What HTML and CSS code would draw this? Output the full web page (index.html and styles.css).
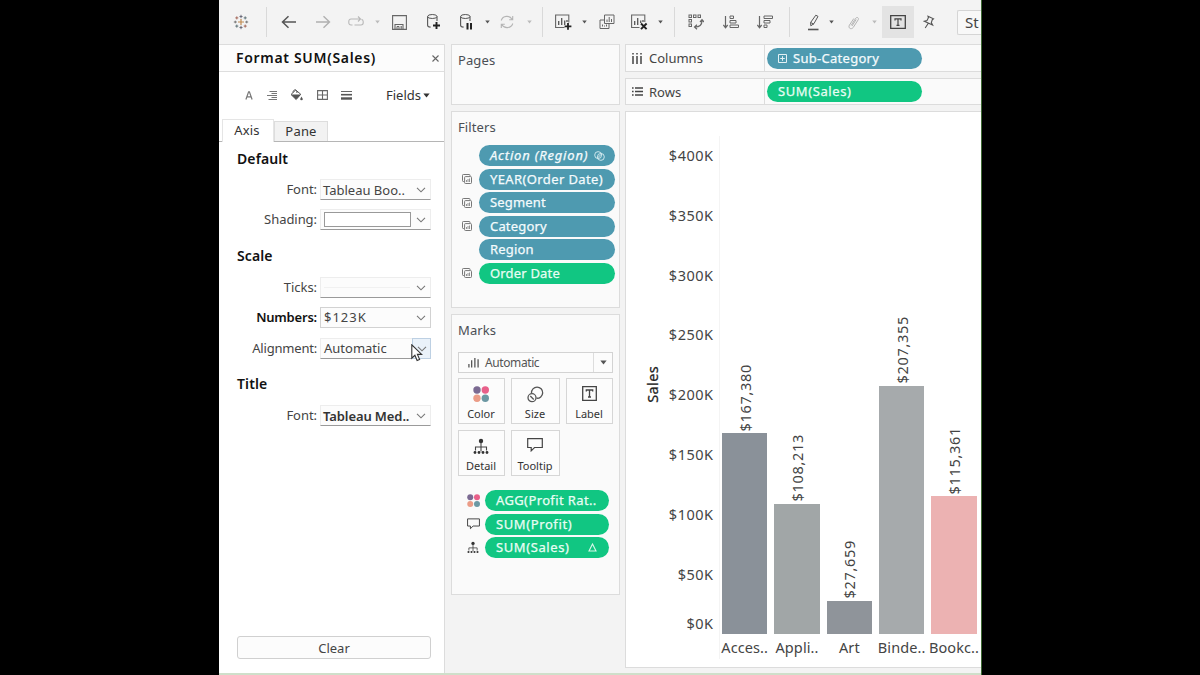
FILE: index.html
```html
<!DOCTYPE html>
<html lang="en">
<head>
<meta charset="utf-8">
<title>Format SUM(Sales)</title>
<link rel="stylesheet" href="styles.css">
</head>
<body>
<svg class="defs" aria-hidden="true">
  <defs>
    <symbol id="chev" viewBox="0 0 10 6"><path d="M1 .8 5 4.8 9 .8" fill="none" stroke="#777" stroke-width="1.1"/></symbol>
    <symbol id="caret" viewBox="0 0 6 4"><path d="M.3.3h5.4L3 3.8z" fill="currentColor"/></symbol>
    <symbol id="sheets" viewBox="0 0 10 10"><path d="M2 7.5H1.3A.8.8 0 0 1 .5 6.700V1.300A.8.8 0 0 1 1.300.5H7.200A.8.8 0 0 1 8 1.300V2" fill="none" stroke="#777"/><rect x="2.600" y="2.600" width="6.900" height="6.900" rx=".8" fill="none" stroke="#777"/><path d="M4.500 8V6M6 8V5M7.500 8V4.500" stroke="#888" stroke-width=".9"/></symbol>
    <symbol id="dots" viewBox="0 0 16 16"><circle cx="4" cy="4" r="3.700" fill="#7b6a92"/><circle cx="12.300" cy="4" r="3.700" fill="#e8608a"/><circle cx="4" cy="12.300" r="3.700" fill="#eb9c87"/><circle cx="12.300" cy="12.300" r="3.700" fill="#6c98a3"/></symbol>
    <symbol id="tree" viewBox="0 0 16 16"><g fill="#333"><circle cx="8" cy="2.500" r="2.200"/><circle cx="2" cy="14" r="1.400"/><circle cx="6" cy="14" r="1.400"/><circle cx="10" cy="14" r="1.400"/><circle cx="14" cy="14" r="1.400"/></g><path d="M8 4v9M2.500 12V8.500h11V12" fill="none" stroke="#444" stroke-width="1.100"/></symbol>
    <symbol id="bubble" viewBox="0 0 16 14"><path d="M.7.7h14.600v8.800H7.500L4.200 12.800V9.500H.7z" fill="none" stroke="#444" stroke-width="1.200"/></symbol>
  </defs>
</svg>
<div class="screen">
  <header class="toolbar">
    <svg width="16" height="16" viewBox="0 0 16 16" fill="none"><path d="M8 5v6M5 8h6" stroke="#c08a50" stroke-width="1.200"/><path d="M8 .8v3.400M6.500 2.500h3M8 11.800v3.400M6.500 13.500h3" stroke="#6b6b7b"/><path d="M.8 8h3M2.300 6.700v2.600M12.200 8h3M13.700 6.700v2.600" stroke="#777"/><path d="M3.800 2.400v3M2.300 3.900h3M12.200 10.600v3M10.700 12.100h3" stroke="#a5695b"/><path d="M12.200 2.400v3M10.700 3.900h3M3.800 10.600v3M2.300 12.100h3" stroke="#62757a"/></svg>
    <i class="sep"></i>
    <svg width="16" height="14" viewBox="0 0 16 14"><path d="M15 7H1.500M7.500 1.200 1.500 7l6 5.800" fill="none" stroke="#555" stroke-width="1.500"/></svg>
    <svg width="16" height="14" viewBox="0 0 16 14"><path d="M1 7h13.500M8.500 1.200l6 5.800-6 5.800" fill="none" stroke="#b0b0b0" stroke-width="1.400"/></svg>
    <svg width="16" height="12" viewBox="0 0 16 12"><path d="M4.500 9H3a2.200 2.200 0 0 1-2.200-2.200V5.200A2.200 2.200 0 0 1 3 3h9.500M10 .5 12.500 3 10 5.500M13.500 3.400a2.200 2.200 0 0 1 1.700 2.100v1.300A2.200 2.200 0 0 1 13 9H6.500" fill="none" stroke="#b8b8b8" stroke-width="1.100"/></svg>
    <svg class="car pale" width="5" height="4"><use href="#caret"/></svg>
    <svg width="15" height="15" viewBox="0 0 15 15"><path d="M.6.600h13.800v13.800H.6zM3 14V9.500h8V14" fill="none" stroke="#666" stroke-width="1.100"/><path d="M5 14v-2.500h2V14" fill="none" stroke="#666"/><path d="M8.500 11h1.500v3H8.500z" fill="#888"/></svg>
    <svg width="15" height="18" viewBox="0 0 15 18"><path d="M1.600 3.500v8.700c0 1 1 1.700 3 1.900M11 3.500V8" fill="none" stroke="#555" stroke-width="1.100"/><ellipse cx="6.300" cy="3.500" rx="4.700" ry="2" fill="none" stroke="#555"/><path d="M10.500 9v7M7 12.500h7" stroke="#222" stroke-width="1.900"/></svg>
    <svg width="15" height="18" viewBox="0 0 15 18"><path d="M1.600 3.500v8.700c0 1 1 1.700 3 1.900M11 3.500V8" fill="none" stroke="#555" stroke-width="1.100"/><ellipse cx="6.300" cy="3.500" rx="4.700" ry="2" fill="none" stroke="#555"/><path d="M8.500 10v6.500M12 10v6.500" stroke="#222" stroke-width="2"/></svg>
    <svg class="car" width="5" height="4"><use href="#caret"/></svg>
    <svg width="16" height="16" viewBox="0 0 16 16"><path d="M2.200 6.500a6 6 0 0 1 11-1M13.800 9.500a6 6 0 0 1-11 1M13.700 2v3.800H10.200M2.300 14v-3.800h3.500" fill="none" stroke="#b5b5b5" stroke-width="1.100"/></svg>
    <svg class="car pale" width="5" height="4"><use href="#caret"/></svg>
    <i class="sep"></i>
    <svg class="nudge" width="18" height="18" viewBox="0 0 18 18"><path d="M10.500 14.500H1.600V2h13.200v7.500" fill="none" stroke="#666" stroke-width="1.100"/><path d="M4.700 12V8M7.700 12V5M10.700 12V7.500M13 9V7" stroke="#555" stroke-width="1.300"/><path d="M14 10v6.800M10.600 13.400h6.800" stroke="#222" stroke-width="1.800"/></svg>
    <svg class="car nudge" width="5" height="4"><use href="#caret"/></svg>
    <svg width="16" height="16" viewBox="0 0 16 16" fill="none" stroke="#666"><path d="M5.500 1h9.500v8.500H5.500zM5.500 6H1v8.500h9V9.500"/><path d="M8 8V5.500M10.200 8V3M12.500 8V5M3.500 12.500v-2M5.500 12.500v-1M7.500 12.500v-2"/></svg>
    <svg class="nudge" width="18" height="18" viewBox="0 0 18 18"><path d="M9.500 14.500H1.600V2h13.200v7" fill="none" stroke="#666" stroke-width="1.100"/><path d="M4.700 12V8M7.700 12V5M10.700 10V7.500M13 9V7" stroke="#555" stroke-width="1.300"/><path d="m11 10.500 5.600 5.600M16.600 10.500 11 16.100" stroke="#222" stroke-width="1.900"/></svg>
    <svg class="car" width="5" height="4"><use href="#caret"/></svg>
    <i class="sep"></i>
    <svg width="16" height="16" viewBox="0 0 16 16" fill="none" stroke="#666"><rect x="1" y="1" width="2.500" height="2.500"/><rect x="5.500" y="1" width="2.500" height="2.500"/><rect x="10" y="1" width="2.500" height="2.500"/><rect x="1" y="5.500" width="2.500" height="2.500"/><rect x="1" y="10" width="2.500" height="2.500"/><path d="M14 6.500c0 4-2.300 6.500-7 6.500M12 8l2-2.300L16 8M9 10.700 6.500 13 9 15.300" stroke-width="1.200"/></svg>
    <svg width="16" height="14" viewBox="0 0 16 14" fill="none" stroke="#666"><path d="M2.500 1v11.500M.3 10l2.200 2.700L4.700 10" stroke-width="1.200"/><path d="M7 1h3.500v2.500H7zM7 5.500h6V8H7zM7 10h8.500v2.500H7z"/></svg>
    <svg width="16" height="14" viewBox="0 0 16 14" fill="none" stroke="#666"><path d="M2.500 1v11.500M.3 10l2.200 2.700L4.700 10" stroke-width="1.200"/><path d="M7 1h8.500v2.500H7zM7 5.500h6V8H7zM7 10h3v2.500H7z"/></svg>
    <i class="sep"></i>
    <svg width="13" height="17" viewBox="0 0 13 17" fill="none" stroke="#555"><path d="M8.800 1.200 11 2.400 6.900 9.700 3.800 11.800 3.600 8.500zM3.700 8.500 7 10.200"/><path d="M1 15.500h10.500" stroke-width="1.600"/></svg>
    <svg class="car" width="5" height="4"><use href="#caret"/></svg>
    <svg width="13" height="15" viewBox="0 0 13 15"><path d="m4.200 10.300 4.500-7c1.300-1.800 3.600-.3 2.500 1.500l-5 7.700c-2 2.600-5.400.5-3.800-2.300L6.800 3.500M5 11l4.200-6.500" fill="none" stroke="#b3b3b3"/></svg>
    <svg class="car pale" width="5" height="4"><use href="#caret"/></svg>
    <span class="toggle"><svg width="16" height="14" viewBox="0 0 16 14"><path d="M.7.700h14.600v12.600H.7z" fill="none" stroke="#444" stroke-width="1.300"/><path d="M5 5.500V3.800h6v1.700M8 3.800v6.700M6.500 10.400h3" fill="none" stroke="#444" stroke-width="1.200"/></svg></span>
    <svg class="nudge" width="12" height="14" viewBox="0 0 12 14"><path d="M5 1.200 10.500 3.800 9.300 4.700 8.300 7.600 9.600 10 1.300 6.200 4 5.500 5.400 2.800zM5.300 8.200 2.200 13" fill="none" stroke="#555" stroke-width="1.100"/></svg>
    <span class="fit">St</span>
  </header>

  <main class="workspace">
    <aside class="format">
      <div class="format-title"><h1>Format SUM(Sales)</h1><svg width="7" height="7" viewBox="0 0 7 7"><path d="m.5.500 6 6M6.500.500l-6 6" stroke="#666" stroke-width="1.100"/></svg></div>
      <div class="format-icons">
        <svg width="8" height="9" viewBox="0 0 8 9"><path d="M.9 8.500 3.600.900h.8L7.100 8.500M1.800 5.800h4.400" fill="none" stroke="#777" stroke-width="1.200"/></svg>
        <svg width="10" height="9" viewBox="0 0 10 9"><path d="M2.500.5H10M4.500 2.500H10M0 4.500h10M4.500 6.500H10M1.500 8.500H10" stroke="#777"/></svg>
        <svg width="13" height="12" viewBox="0 0 13 12"><path d="M1 5.500 5.700 1l5 4.200-4.500 5.300z" fill="none" stroke="#555"/><path d="M1 5.500h10l-5 5z" fill="#555"/><path d="M3 3.500C3 0 7 0 7 4" fill="none" stroke="#555"/><path d="M11.500 7.500 12.800 10a1.300 1.300 0 0 1-2.600 0z" fill="#555"/></svg>
        <svg width="11" height="10" viewBox="0 0 11 10"><path d="M.6.600h9.800v8.800H.6zM5.500.600v8.800M.6 5h9.800" fill="none" stroke="#666" stroke-width="1.100"/></svg>
        <svg width="11" height="9" viewBox="0 0 11 9"><path d="M0 .5h11" stroke="#666"/><path d="M0 3.700h11" stroke="#555" stroke-width="1.600"/><path d="M0 7.500h11" stroke="#555" stroke-width="2.400"/></svg>
        <span class="fields">Fields<svg width="7" height="5"><use href="#caret"/></svg></span>
      </div>
      <div class="tabs"><span class="tab on">Axis</span><span class="tab">Pane</span></div>
      <div class="form">
        <h2>Default</h2>
        <div class="field"><label>Font:</label><span class="select"><span class="t-book">Tableau Boo..</span><svg width="10" height="6"><use href="#chev"/></svg></span></div>
        <div class="field"><label>Shading:</label><span class="select"><i class="swatch"></i><svg width="10" height="6"><use href="#chev"/></svg></span></div>
        <h2 class="h-scale">Scale</h2>
        <div class="field"><label>Ticks:</label><span class="select"><i class="rule"></i><svg width="10" height="6"><use href="#chev"/></svg></span></div>
        <div class="field"><label class="bold">Numbers:</label><span class="select boxed"><span class="t-num">$123K</span><svg width="10" height="6"><use href="#chev"/></svg></span></div>
        <div class="field last"><label class="t-align">Alignment:</label><span class="select"><span>Automatic</span><span class="hot"><svg width="10" height="6"><use href="#chev"/></svg></span>
          <svg class="cursor" width="12" height="18" viewBox="0 0 12 18"><path d="M.8.800v13.400l3.100-2.900 2.200 5.200 2.500-1.100-2.200-5h4.300z" fill="#fff" stroke="#333" stroke-width="1.100"/></svg></span></div>
        <h2 class="h-title">Title</h2>
        <div class="field"><label>Font:</label><span class="select"><span class="med">Tableau Med..</span><svg width="10" height="6"><use href="#chev"/></svg></span></div>
      </div>
      <button class="clear">Clear</button>
    </aside>

    <section class="cards">
      <div class="card pages"><h3>Pages</h3></div>
      <div class="card filters">
        <h3>Filters</h3>
        <ul class="pills">
          <li><i></i><span class="pill"><em>Action (Region)</em><svg width="11" height="10" viewBox="0 0 12 11" fill="none" stroke="#d9edf2"><circle cx="4.500" cy="4.500" r="3.800"/><circle cx="7.500" cy="6.500" r="3.800"/><path d="m4 7.500 4-4"/></svg></span></li>
          <li><svg width="10" height="10"><use href="#sheets"/></svg><span class="pill"><span class="caps">YEAR(Order Date)</span></span></li>
          <li><svg width="10" height="10"><use href="#sheets"/></svg><span class="pill">Segment</span></li>
          <li><svg width="10" height="10"><use href="#sheets"/></svg><span class="pill">Category</span></li>
          <li><i></i><span class="pill">Region</span></li>
          <li><svg width="10" height="10"><use href="#sheets"/></svg><span class="pill green">Order Date</span></li>
        </ul>
      </div>
      <div class="card marks">
        <h3>Marks</h3>
        <div class="mark-type"><svg width="11" height="11" viewBox="0 0 12 11"><path d="M1 11V7M4 11V3M7.500 11V0.500M11 11V2" stroke="#555" stroke-width="1.400"/></svg><span>Automatic</span><b><svg width="7" height="5"><use href="#caret"/></svg></b></div>
        <div class="mark-grid">
          <div class="mark"><svg width="16" height="16"><use href="#dots"/></svg><span>Color</span></div>
          <div class="mark"><svg width="17" height="17" viewBox="0 0 17 17" fill="none" stroke="#555" stroke-width="1.300"><path d="M4.500 7a5.600 5.600 0 1 1 5 5.200"/><circle cx="5" cy="11.700" r="4"/><path d="M3.300 10l3.500 3.500"/></svg><span>Size</span></div>
          <div class="mark"><svg width="15" height="15" viewBox="0 0 15 15" fill="none" stroke="#444" stroke-width="1.300"><path d="M.7.700h13.600v13.600H.7z"/><path d="M4.300 5.500V4h6.400v1.500M7.500 4v7M6 11h3"/></svg><span>Label</span></div>
          <div class="mark"><svg width="16" height="17"><use href="#tree"/></svg><span>Detail</span></div>
          <div class="mark"><svg width="16" height="14"><use href="#bubble"/></svg><span>Tooltip</span></div>
        </div>
        <ul class="pills encodings">
          <li><svg width="13" height="13"><use href="#dots"/></svg><span class="pill green"><span class="caps">AGG(Profit Rat..</span></span></li>
          <li><svg width="13" height="12"><use href="#bubble"/></svg><span class="pill green"><span class="sum">SUM(Profit)</span></span></li>
          <li><svg width="12" height="13"><use href="#tree"/></svg><span class="pill green"><span class="sum">SUM(Sales)</span><svg class="delta" width="9" height="9" viewBox="0 0 9 9"><path d="M4.500 1 8 8H1z" fill="none" stroke="#d8f7e8" stroke-width="1.100"/></svg></span></li>
        </ul>
      </div>
    </section>

    <section class="sheet">
      <div class="shelf">
        <div class="shelf-name"><svg width="10" height="11" viewBox="0 0 10 11"><path d="M1 0v1.500M1 3v8M5 0v1.500M5 3v8M9 0v1.500M9 3v8" stroke="#444" stroke-width="1.500"/></svg><span>Columns</span></div>
        <span class="pill"><svg class="plus" width="9" height="9" viewBox="0 0 9 9"><path d="M.5.500h8v8h-8zM4.500 2.200v4.600M2.200 4.500h4.600" fill="none" stroke="#e4f1f5"/></svg><span class="sub">Sub-Category</span></span>
      </div>
      <div class="shelf">
        <div class="shelf-name rows"><svg width="11" height="9" viewBox="0 0 11 9"><path d="M0 1h1.600M3 1h8M0 4.500h1.600M3 4.500h8M0 8h1.600M3 8h8" stroke="#444" stroke-width="1.400"/></svg><span>Rows</span></div>
        <span class="pill green"><span class="sum">SUM(Sales)</span></span>
      </div>
      <div class="viz">
        <div class="axis-title"><span>Sales</span></div>
        <div class="ticks"><span>$400K</span><span>$350K</span><span>$300K</span><span>$250K</span><span>$200K</span><span>$150K</span><span>$100K</span><span>$50K</span><span class="zero">$0K</span></div>
        <div class="plot">
          <div class="col"><span class="val">$167,380</span><i class="bar b1" style="height:200.700px"></i><span class="cat">Acces..</span></div>
          <div class="col"><span class="val">$108,213</span><i class="bar b2" style="height:130px"></i><span class="cat">Appli..</span></div>
          <div class="col"><span class="val">$27,659</span><i class="bar b3" style="height:33px"></i><span class="cat">Art</span></div>
          <div class="col"><span class="val">$207,355</span><i class="bar b4" style="height:248.500px"></i><span class="cat">Binde..</span></div>
          <div class="col"><span class="val">$115,361</span><i class="bar b5" style="height:137.700px"></i><span class="cat">Bookc..</span></div>
        </div>
      </div>
    </section>
  </main>
  <footer class="strip"></footer>
</div>
</body>
</html>
```

FILE: styles.css
```css
* { box-sizing: border-box; }
body { margin: 0; background: #000; font-family: "Noto Sans", "Open Sans", sans-serif; font-size: 13px; color: #444; }
h1, h2, h3, ul { margin: 0; padding: 0; }
i { display: block; }
svg { display: block; flex: none; }
.defs { position: absolute; width: 0; height: 0; }

.screen { width: 763px; height: 675px; margin-left: 219px; background: #f3f3f3; border-right: 1px solid #3f6b35; display: flex; flex-direction: column; overflow: hidden; }
.strip { height: 2px; background: #cfdfca; }

/* Toolbar */
.toolbar { height: 44px; flex: none; display: grid; align-items: center; justify-items: center;
  grid-template-columns: 44px 6px 40px 28px 38px 4px 40px 28px 38px 4px 36px 8px 18px 26px 16px 28px 38px 3px 24px 20px 50px 18px 30px 18px 18px 26px 16px 33px 30px 36px; }
.sep { width: 1px; height: 30px; background: #d9d9d9; }
.car { color: #555; }
.pale { color: #bbb; }
.nudge { margin-right: 2px; }
.toggle { width: 32px; height: 32px; margin-right: 1px; background: #e3e3e3; display: grid; place-items: center; }
.fit { justify-self: end; width: 24px; height: 25px; border: 1px solid #d5d5d5; border-right: 0; border-radius: 2px 0 0 2px; background: #f8f8f8; padding-left: 7px; line-height: 23px; font-size: 15px; white-space: nowrap; }

.workspace { flex: 1; min-height: 0; display: grid; grid-template-columns: 226px 169px 356px; column-gap: 6px; }

/* Format pane */
.format { background: #fff; border: 1px solid #dcdcdc; border-left: 0; border-bottom: 0; display: flex; flex-direction: column; }
.format-title { height: 27px; border-bottom: 1px solid #dedede; background: #fcfcfc; display: flex; align-items: center; justify-content: space-between; padding: 0 5px 0 17px; }
h1 { font-size: 14px; line-height: 26px; font-weight: 600; color: #111; letter-spacing: .68px; }
.format-icons { height: 46px; display: flex; align-items: center; gap: 13.500px; padding: 0 14px 0 26px; }
.fields { margin-left: auto; display: flex; align-items: center; gap: 2px; color: #333; line-height: 18px; }
.tabs { height: 24px; display: flex; align-items: flex-end; padding-left: 3px; border-bottom: 1px solid #b5b5b5; }
.tab { width: 54px; height: 20px; line-height: 18px; text-align: center; background: #f2f2f2; border: 1px solid #ddd; border-bottom: 0; color: #333; letter-spacing: .2px; }
.tab.on { width: 52px; height: 23px; line-height: 21px; background: #fff; border-color: #e5e5e5; margin-bottom: -1px; padding-right: 2px; }
.form { flex: 1; padding-top: 8px; }
h2 { height: 20px; margin: 0 0 9px 18px; font-size: 14px; line-height: 18px; font-weight: 600; color: #111; letter-spacing: .1px; }
.h-scale { margin: 17px 0 10px 18px; }
.h-title { margin: 16px 0 10px 18px; }
.field { display: flex; height: 21px; gap: 3px; margin-bottom: 9px; }
.field.last { margin-top: 10px; }
.field label { width: 98px; text-align: right; line-height: 21px; white-space: nowrap; color: #444; letter-spacing: -.05px; }
.field label.bold { font-weight: 600; color: #111; letter-spacing: -.2px; }
.field label.t-align { letter-spacing: -.2px; }
.select { position: relative; width: 111px; background: #fcfcfc; border: 1px solid #ededed; border-bottom-color: #9a9a9a; display: flex; align-items: center; justify-content: space-between; padding: 0 4px 0 3px; line-height: 19px; white-space: nowrap; }
.select.boxed { border-color: #d2d2d2; }
.t-book, .med { line-height: 20px; padding-top: 1px; margin-left: -1px; }
.t-num { letter-spacing: 1px; }
.med { font-weight: 600; color: #333; letter-spacing: -.1px; }
.swatch { width: 87px; height: 15px; border: 1px solid #999; background: #fff; }
.rule { width: 86px; height: 1px; background: #f1f1f1; }
.hot { width: 19px; height: 21px; margin-right: -5px; background: #eaf2fa; border: 1px solid #bdd0e3; display: grid; place-items: center; }
.cursor { position: absolute; left: 90px; top: 5px; }
.clear { width: 194px; height: 23px; margin: 0 0 14px 18px; border: 1px solid #d0d0d0; border-radius: 3px; background: #fcfcfc; font: inherit; line-height: 20px; color: #444; padding: 0; }

/* Cards */
.cards { display: flex; flex-direction: column; gap: 6px; }
.card { background: #fafafa; border: 1px solid #dcdcdc; padding: 0 0 0 6px; }
.pages { height: 61px; }
.filters { height: 197px; }
.marks { height: 281px; }
h3 { font-size: 13px; line-height: 18px; font-weight: 400; padding-top: 6px; color: #4a4f55; letter-spacing: .1px; }
.pills { list-style: none; display: flex; flex-direction: column; gap: 2.600px; padding-top: 9px; }
.pills li { display: grid; grid-template-columns: 21px 136px; align-items: center; }
.pills li > :first-child { margin-left: 4px; }
.pill { height: 21px; border-radius: 11px; background: #4e9ab0; color: #f4fbfd; display: flex; align-items: center; justify-content: space-between; padding: 0 10px 0 11px; line-height: 21px; white-space: nowrap; letter-spacing: .18px; -webkit-text-stroke: .25px currentColor; }
.pill em { letter-spacing: .8px; }
.pill .caps { letter-spacing: .38px; }
.pill .sum { letter-spacing: .6px; }
.pill .sub { letter-spacing: .28px; }
.delta { margin-right: 2px; }
.green { background: #11c682; color: #e9fdf4; }
.mark-type { height: 21px; width: 155px; margin-top: 13px; border: 1px solid #d3d3d3; background: #fcfcfc; display: flex; align-items: center; padding-left: 9px; gap: 6px; font-size: 12px; letter-spacing: -.4px; color: #555; }
.mark-type b { margin-left: auto; width: 19px; height: 19px; border-left: 1px solid #ddd; display: grid; place-items: center; }
.mark-grid { display: grid; grid-template-columns: 47px 49px 47px; gap: 6px; padding-top: 5px; }
.mark { height: 46px; border: 1px solid #d6d6d6; background: #fcfcfc; display: flex; flex-direction: column; align-items: center; justify-content: space-between; padding: 7px 1px 2px 0; font-size: 11px; line-height: 15px; color: #333; }
.encodings { padding-top: 14px; }
.encodings li { grid-template-columns: 27px 124px; }
.encodings li > :first-child { margin-left: 9px; }

/* Shelves and view */
.sheet { display: flex; flex-direction: column; gap: 6px; margin-left: -1px; }
.shelf { height: 28px; flex: none; background: #fafafa; border: 1px solid #dcdcdc; border-right: 0; display: flex; align-items: center; }
.shelf:nth-child(2) { height: 27px; }
.shelf-name { width: 139px; height: 100%; border-right: 1px solid #dcdcdc; display: flex; align-items: center; gap: 7px; padding-left: 6px; }
.shelf-name.rows { gap: 6px; }
.shelf .pill { width: 155px; margin-left: 2px; justify-content: flex-start; }
.shelf .plus { margin-right: 6px; }
.viz { height: 557px; background: #fff; border: 1px solid #dcdcdc; border-right: 0; display: grid; grid-template-columns: 32px 61px 262px; overflow: hidden; color: #444; font-size: 14.500px; }
.axis-title { display: flex; justify-content: flex-end; align-items: flex-start; padding-top: 254px; }
.axis-title span, .val { writing-mode: vertical-rl; transform: rotate(180deg); line-height: 18px; }
.axis-title span { font-size: 14.500px; letter-spacing: .35px; color: #222; margin-right: -3px; -webkit-text-stroke: .25px #222; }
.ticks { padding: 33px 6px 0 0; display: flex; flex-direction: column; align-items: flex-end; letter-spacing: .5px; }
.ticks span { height: 59.800px; line-height: 20px; margin-right: -.5px; }
.ticks .zero { margin-top: -10px; }
.plot { height: 523px; margin-top: 24px; border-left: 1px solid #f4f4f4; display: flex; align-items: flex-end; gap: 6.950px; padding-left: 2px; }
.col { width: 45.400px; display: flex; flex-direction: column; align-items: center; flex: none; }
.val { margin-bottom: 2px; letter-spacing: .7px; }
.bar { width: 100%; }
.cat { height: 25px; line-height: 26px; white-space: nowrap; letter-spacing: .1px; }
.b1 { background: #8a9199; }
.b2 { background: #a1a6a7; }
.b3 { background: #8f949a; }
.b4 { background: #a6aaac; }
.b5 { background: #ecb2b2; }
```
